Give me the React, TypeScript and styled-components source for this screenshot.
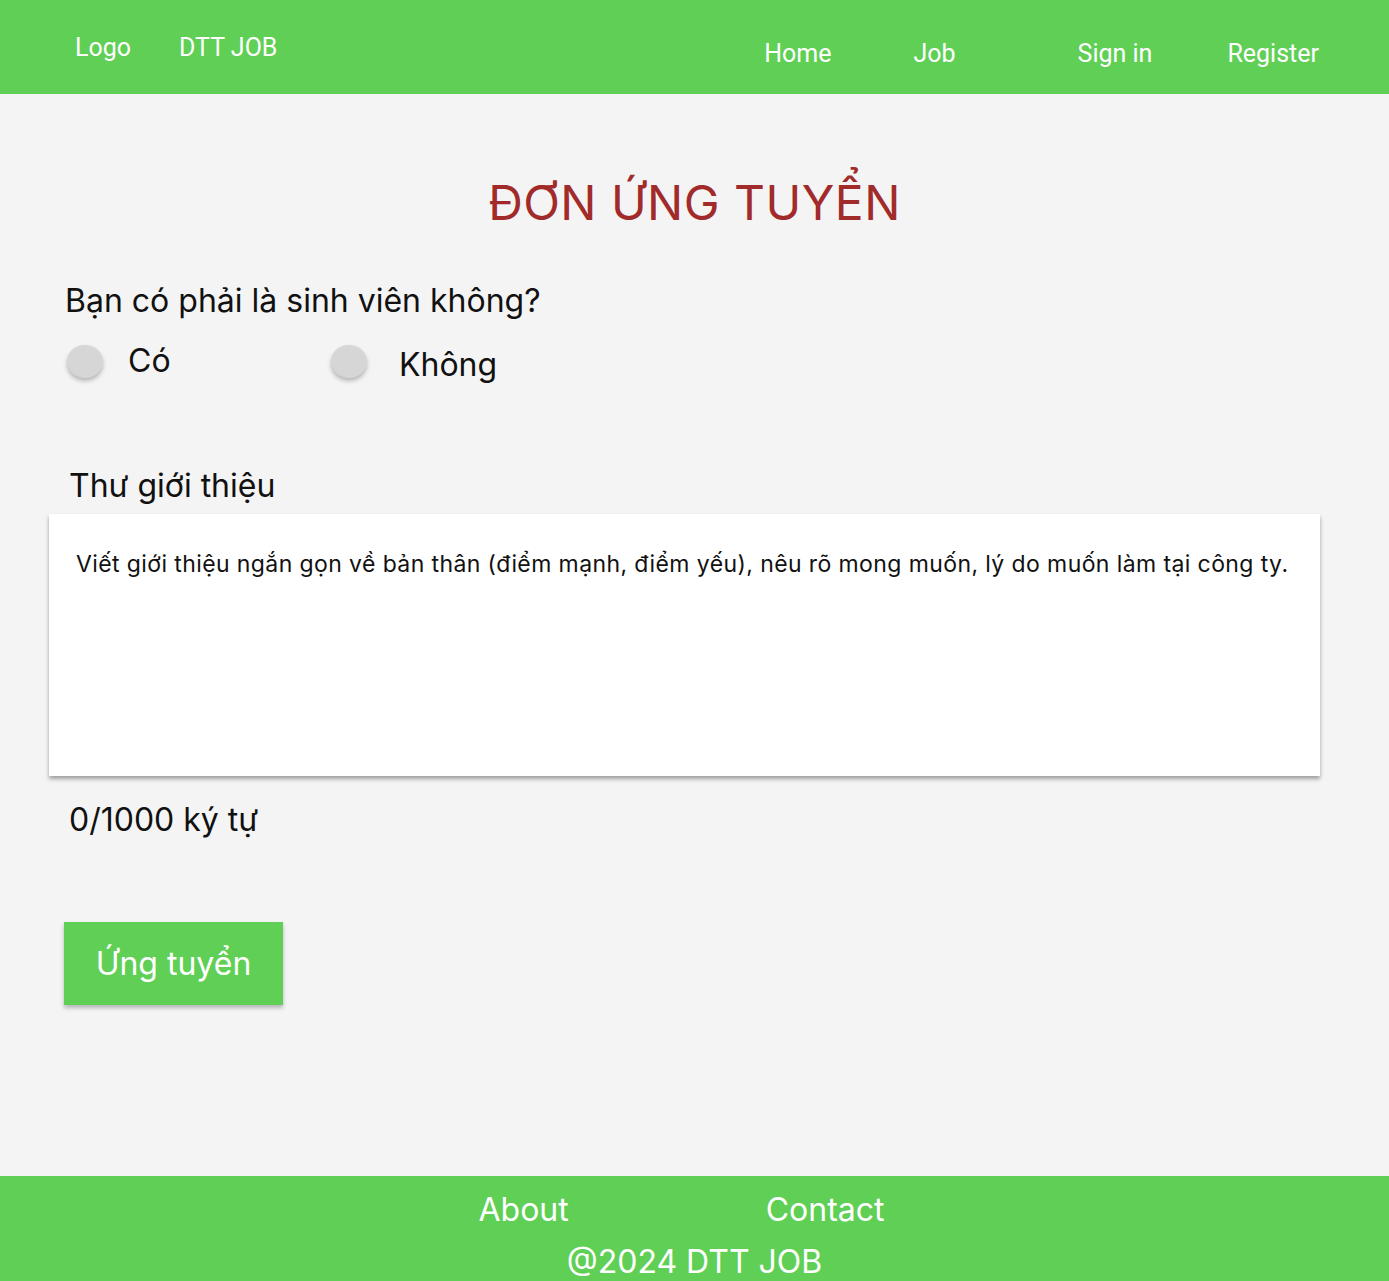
import styled, { createGlobalStyle } from 'styled-components';

const colors = {
    green: '#5fcf55',
    bg: '#f4f4f4',
    red: '#a12b2b',
    white: '#ffffff',
    text: '#111111',
};

const GlobalStyle = createGlobalStyle`
    body {
        margin: 0;
        background: ${colors.bg};
        font-family: Inter, 'Noto Sans', sans-serif;
        color: ${colors.text};
    }
`;

const Page = styled.div`
    display: flex;
    flex-direction: column;
    min-height: 1281px;
`;

const Header = styled.header`
    height: 94px;
    background: ${colors.green};
    display: flex;
    align-items: center;
    justify-content: space-between;
    padding: 0 70px 0 75px;
    font-family: Roboto, sans-serif;
    font-size: 25px;
    color: ${colors.white};
`;

const Brand = styled.div`
    display: flex;
    gap: 48px;
`;

const Nav = styled.nav`
    display: flex;
    align-items: center;
    margin-top: 12px;
`;

const NavLink = styled.a<{ $gap: number }>`
    margin-left: ${(p) => p.$gap}px;
    color: ${colors.white};
    text-decoration: none;
`;

const Main = styled.main`
    flex: 1;
    padding: 0 69px 0 49px;
`;

const Title = styled.h1`
    margin: 80px -20px 0 0;
    text-align: center;
    font-size: 48px;
    font-weight: 400;
    letter-spacing: 0.5px;
    color: ${colors.red};
    line-height: 58px;
`;

const Question = styled.p`
    margin: 50px 0 0 16px;
    font-size: 32px;
    line-height: 38px;
`;

const Options = styled.div`
    display: flex;
    align-items: center;
    height: 40px;
    margin: 21px 0 0 18px;
`;

const Option = styled.label<{ $width: number; $gap: number; $drop: number }>`
    display: flex;
    align-items: center;
    width: ${(p) => p.$width}px;
    gap: ${(p) => p.$gap}px;
    font-size: 32px;
    line-height: 38px;

    span:last-child {
        margin-top: ${(p) => p.$drop}px;
    }
`;

const Radio = styled.span`
    flex: none;
    width: 36px;
    height: 33px;
    border-radius: 50%;
    background: #d6d6d6;
    box-shadow: 0 3px 4px rgba(0, 0, 0, 0.25);
`;

const FieldLabel = styled.p`
    margin: 86px 0 0 20px;
    font-size: 32px;
    line-height: 38px;
`;

const TextBox = styled.div`
    margin-top: 9px;
    height: 262px;
    background: ${colors.white};
    box-shadow: 0 3px 4px rgba(0, 0, 0, 0.35);
    padding: 35px 20px 35px 27px;
    box-sizing: border-box;
    font-size: 23px;
    letter-spacing: 0.4px;
    line-height: 30px;
    white-space: nowrap;
`;

const Counter = styled.p`
    margin: 25px 0 0 20px;
    font-size: 32px;
    line-height: 38px;
`;

const SubmitButton = styled.button`
    display: block;
    margin: 83px 0 0 15px;
    width: 219px;
    height: 83px;
    border: none;
    background: ${colors.green};
    color: ${colors.white};
    font-family: Inter, sans-serif;
    font-size: 32px;
    box-shadow: 0 3px 4px rgba(0, 0, 0, 0.25);
`;

const Footer = styled.footer`
    height: 105px;
    background: ${colors.green};
    color: ${colors.white};
    font-size: 32px;
    display: flex;
    flex-direction: column;
    align-items: center;
    padding-top: 15px;
    box-sizing: border-box;
`;

const FooterLinks = styled.div`
    display: flex;
    gap: 197px;
    margin-left: -26px;
    line-height: 38px;
`;

const Copyright = styled.div`
    line-height: 38px;
    margin-top: 14px;
`;

export default function App() {
    return (
        <Page>
            <GlobalStyle />
            <Header>
                <Brand>
                    <span>Logo</span>
                    <span>DTT JOB</span>
                </Brand>
                <Nav>
                    <NavLink $gap={0} href="#">Home</NavLink>
                    <NavLink $gap={82} href="#">Job</NavLink>
                    <NavLink $gap={122} href="#">Sign in</NavLink>
                    <NavLink $gap={75} href="#">Register</NavLink>
                </Nav>
            </Header>
            <Main>
                <Title>ĐƠN ỨNG TUYỂN</Title>
                <Question>Bạn có phải là sinh viên không?</Question>
                <Options>
                    <Option $width={264} $gap={25} $drop={0}>
                        <Radio />
                        <span>Có</span>
                    </Option>
                    <Option $width={220} $gap={32} $drop={8}>
                        <Radio />
                        <span>Không</span>
                    </Option>
                </Options>
                <FieldLabel>Thư giới thiệu</FieldLabel>
                <TextBox>
                    Viết giới thiệu ngắn gọn về bản thân (điểm mạnh, điểm yếu), nêu rõ mong muốn, lý do muốn làm tại công ty.
                </TextBox>
                <Counter>0/1000 ký tự</Counter>
                <SubmitButton>Ứng tuyển</SubmitButton>
            </Main>
            <Footer>
                <FooterLinks>
                    <span>About</span>
                    <span>Contact</span>
                </FooterLinks>
                <Copyright>@2024 DTT JOB</Copyright>
            </Footer>
        </Page>
    );
}
